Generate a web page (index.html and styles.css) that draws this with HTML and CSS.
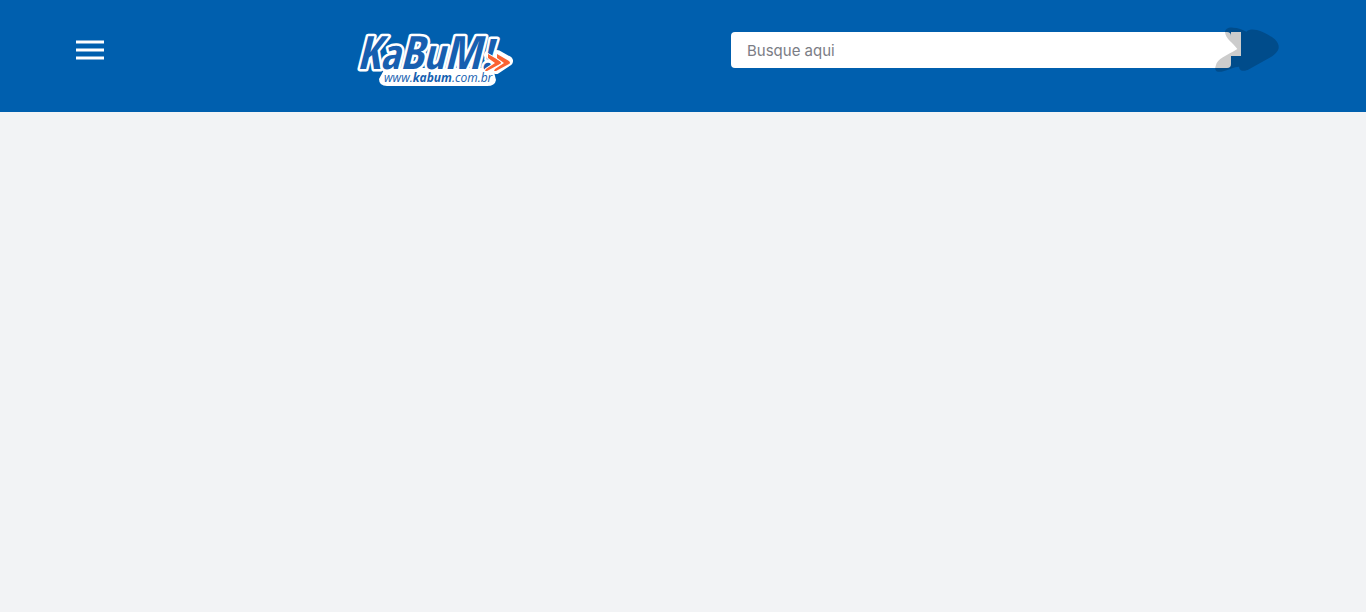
FILE: index.html
```
<!DOCTYPE html>
<html lang="pt-BR">
<head>
<meta charset="utf-8">
<meta name="viewport" content="width=device-width, initial-scale=1">
<title>KaBuM!</title>
<link rel="stylesheet" href="styles.css">
</head>
<body>
<header class="header">
  <button class="menu" type="button" aria-label="Menu">
    <svg width="30" height="22" viewBox="0 0 30 22" aria-hidden="true">
      <path d="M1 3h28M1 11h28M1 19h28" stroke="#fff" stroke-width="3.2"/>
    </svg>
  </button>
  <a class="logo" href="#" aria-label="KaBuM!">
    <svg width="160" height="56" viewBox="0 0 160 56">
      <path d="M30 36H138L141 48Q140 54 132 54H32Q24 54 24 47Z" fill="#fff"/>
      <path d="M134 23l11 6-13 8M142 23l11 6-12 8" fill="#fff" stroke="#fff" stroke-width="10" stroke-linejoin="round" stroke-linecap="round"/>
      <text class="logo-name" x="2" y="37">K<tspan class="logo-small">a</tspan>B<tspan class="logo-small">u</tspan>M<tspan class="logo-small">!</tspan></text>
      <path d="M133 22L145 29Q147 31 145 32L132 39L130 39L131 37L140 31L133 26Z" fill="#fa6332" stroke="#fff" stroke-width="2" paint-order="stroke"/>
      <path d="M142 22L154 29Q156 31 154 32L141 39L139 39L140 37L149 31L142 26Z" fill="#fa6332" stroke="#fff" stroke-width="2" paint-order="stroke"/>
      <text class="logo-site" x="29" y="50">www.<tspan class="logo-strong">kabum</tspan>.com.br</text>
    </svg>
  </a>
  <form class="search" role="search">
    <input class="search-input" type="search" placeholder="Busque aqui" aria-label="Busque aqui">
    <button class="search-button" type="submit" aria-label="Buscar">
      <svg class="search-shape" width="64" height="45" viewBox="0 0 192 135" aria-hidden="true">
        <path d="M30 16C30 5 42 0 54 2C69 2 83 7 94 14C103 6 115 7 126 9C151 16 182 34 188 48C197 65 186 78 168 90L102 127C90 134 73 134 72 119C57 120 42 127 25 133C10 137-4 134 2 117C7 94 33 87 67 66C53 47 32 36 30 16Z" fill="#000" fill-opacity=".2"/>
      </svg>
    </button>
  </form>
</header>
<main class="content"></main>
</body>
</html>
```
FILE: styles.css
```
body {
  margin: 0;
  background: #f2f3f5;
  font-family: Inter, "Open Sans", sans-serif;
}
.header {
  box-sizing: border-box;
  display: grid;
  grid-template-columns: 35fr 47fr 70fr;
  align-items: start;
  min-height: 112px;
  padding: 32px 75px 24px;
  background: #005fae;
}
.menu {
  display: flex;
  align-items: center;
  justify-self: start;
  height: 36px;
  padding: 0;
  border: 0;
  background: none;
}
.logo {
  display: block;
  justify-self: start;
}
.logo svg {
  display: block;
  overflow: visible;
}
.logo-name {
  font: italic bold 46px "Liberation Sans Narrow", "Open Sans Condensed", "DejaVu Sans Condensed", sans-serif;
  fill: #175fb0;
  stroke: #fff;
  stroke-width: 5px;
  stroke-linejoin: round;
  paint-order: stroke;
}
.logo-small {
  font-size: 42px;
}
.logo-site {
  font: italic 12px "Open Sans", sans-serif;
  fill: #175fb0;
}
.logo-strong {
  font-weight: bold;
}
.search {
  display: flex;
  align-items: flex-start;
}
.search-input {
  box-sizing: border-box;
  flex: 0 1 500px;
  min-width: 0;
  height: 36px;
  padding: 0 16px;
  border: 0;
  border-radius: 4px;
  background: #fff;
  font: 15px Inter, sans-serif;
  appearance: none;
}
.search-input::placeholder {
  color: #7b7d85;
  opacity: 1;
}
.search-button {
  position: relative;
  width: 10px;
  height: 24px;
  padding: 0;
  border: 0;
  background: #fff;
}
.search-shape {
  position: absolute;
  top: -5px;
  left: -16px;
}
```
